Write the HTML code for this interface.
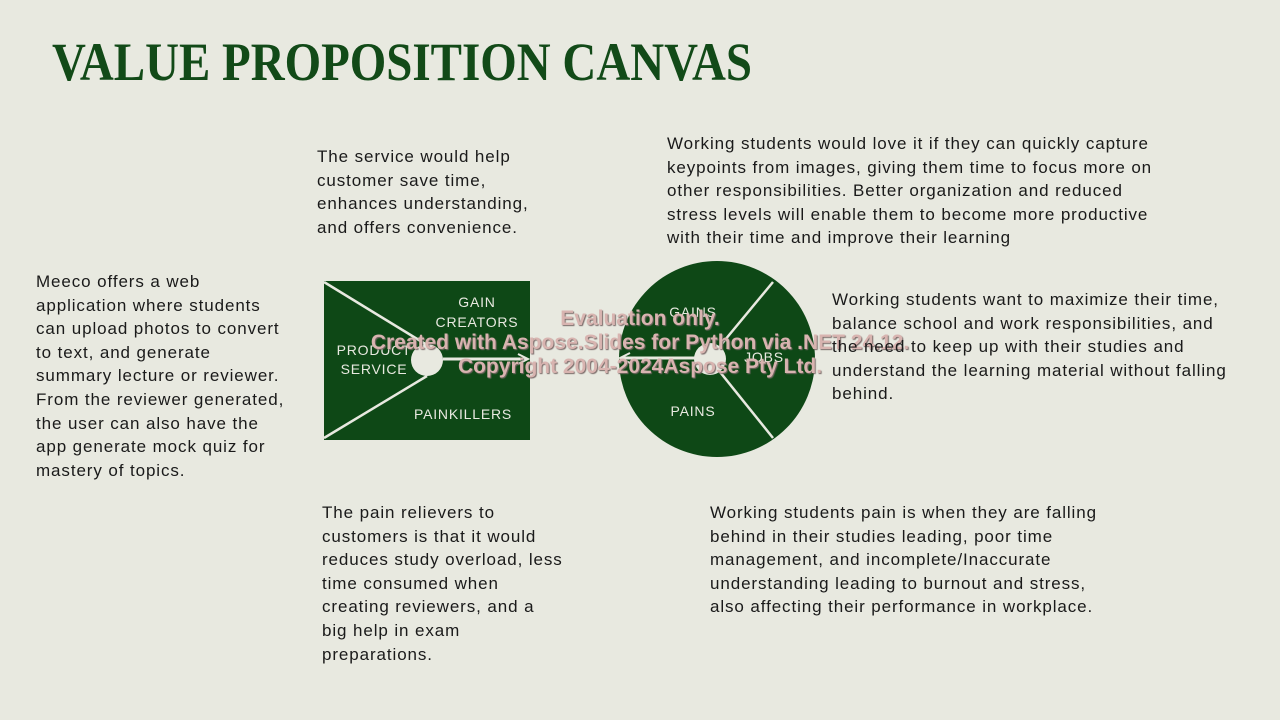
<!DOCTYPE html>
<html><head><meta charset="utf-8"><style>
body{margin:0;width:1280px;height:720px;background:#e8e9e0;position:relative;overflow:hidden;font-family:"Liberation Sans",sans-serif;color:#1a1a1a}
.t{position:absolute;font-size:17px;letter-spacing:0.9px;line-height:23.6px;white-space:nowrap}
svg{position:absolute;left:0;top:0}
.wm{position:absolute;left:0;width:1280px;text-align:center;font-weight:bold;font-size:21px;color:#d8b4b0;text-shadow:1px 1px 1px #7a6a68;white-space:nowrap}
</style></head><body>
<svg width="1280" height="720">
<text x="52" y="80" font-family="Liberation Serif,serif" font-weight="bold" font-size="54" fill="#124a18" textLength="700" lengthAdjust="spacingAndGlyphs">VALUE PROPOSITION CANVAS</text>
<rect x="324" y="281" width="206" height="159" fill="#0e4816"/>
<line x1="324" y1="282" x2="427" y2="345" stroke="#e8e9e0" stroke-width="2.5"/>
<line x1="324" y1="438" x2="427" y2="376" stroke="#e8e9e0" stroke-width="2.5"/>
<circle cx="427" cy="360" r="16" fill="#e8e9e0"/>
<line x1="443" y1="359" x2="527" y2="359" stroke="#e8e9e0" stroke-width="3"/>
<polyline points="518,354 528,359 518,364" fill="none" stroke="#e8e9e0" stroke-width="2"/>
<text fill="#e8e9e0" font-size="14" letter-spacing="0.8" text-anchor="middle"><tspan x="477" y="307">GAIN</tspan><tspan x="477" y="327">CREATORS</tspan><tspan x="374" y="355">PRODUCT</tspan><tspan x="374" y="374">SERVICE</tspan><tspan x="463" y="419">PAINKILLERS</tspan></text>
<circle cx="717" cy="359" r="98" fill="#0e4816"/>
<line x1="720" y1="346" x2="773" y2="282" stroke="#e8e9e0" stroke-width="2.5"/>
<line x1="720" y1="372" x2="773" y2="438" stroke="#e8e9e0" stroke-width="2.5"/>
<circle cx="710" cy="359" r="16" fill="#e8e9e0"/>
<line x1="622" y1="358" x2="700" y2="358" stroke="#e8e9e0" stroke-width="3"/>
<polyline points="630,353 620,358 630,363" fill="none" stroke="#e8e9e0" stroke-width="2"/>
<text fill="#e8e9e0" font-size="14" letter-spacing="0.8" text-anchor="middle"><tspan x="693" y="317">GAINS</tspan><tspan x="764" y="362">JOBS</tspan><tspan x="693" y="416">PAINS</tspan></text>
</svg>
<div class="wm" style="top:307px;">Evaluation only.</div>
<div class="wm" style="top:331px;">Created with Aspose.Slides for Python via .NET 24.12.</div>
<div class="wm" style="top:355px;">Copyright 2004-2024Aspose Pty Ltd.</div>
<div class="t" style="left:317px;top:145px">The service would help<br>customer save time,<br>enhances understanding,<br>and offers convenience.</div>
<div class="t" style="left:667px;top:132px">Working students would love it if they can quickly capture<br>keypoints from images, giving them time to focus more on<br>other responsibilities. Better organization and reduced<br>stress levels will enable them to become more productive<br>with their time and improve their learning</div>
<div class="t" style="left:36px;top:270px">Meeco offers a web<br>application where students<br>can upload photos to convert<br>to text, and generate<br>summary lecture or reviewer.<br>From the reviewer generated,<br>the user can also have the<br>app generate mock quiz for<br>mastery of topics.</div>
<div class="t" style="left:832px;top:288px">Working students want to maximize their time,<br>balance school and work responsibilities, and<br>the need to keep up with their studies and<br>understand the learning material without falling<br>behind.</div>
<div class="t" style="left:322px;top:501px">The pain relievers to<br>customers is that it would<br>reduces study overload, less<br>time consumed when<br>creating reviewers, and a<br>big help in exam<br>preparations.</div>
<div class="t" style="left:710px;top:501px">Working students pain is when they are falling<br>behind in their studies leading, poor time<br>management, and incomplete/Inaccurate<br>understanding leading to burnout and stress,<br>also affecting their performance in workplace.</div>
</body></html>
